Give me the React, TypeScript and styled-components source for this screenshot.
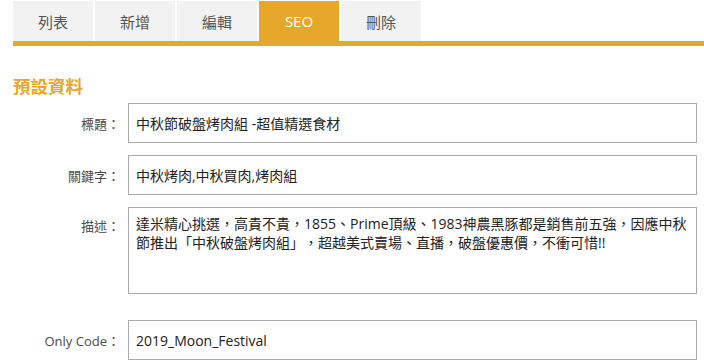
import styled, { createGlobalStyle } from "styled-components";

const tabs = ["列表", "新增", "編輯", "SEO", "刪除"];
const activeTab = "SEO";

const description =
  "達米精心挑選，高貴不貴，1855、Prime頂級、1983神農黑豚都是銷售前五強，因應中秋節推出「中秋破盤烤肉組」，超越美式賣場、直播，破盤優惠價，不衝可惜!!";

const SeoPage = () => {
  return (
    <>
      <GlobalStyle />
      <Wrapper>
        <TabBar>
          {tabs.map((t) => (
            <Tab key={t} $active={t === activeTab}>
              {t}
            </Tab>
          ))}
        </TabBar>

        <Heading>預設資料</Heading>
      </Wrapper>

      <Form>
        <Label>標題：</Label>
        <TextInput readOnly value="中秋節破盤烤肉組 -超值精選食材" />

        <Label>關鍵字：</Label>
        <TextInput readOnly value="中秋烤肉,中秋買肉,烤肉組" />

        <Label $top>描述：</Label>
        <TextArea readOnly value={description} />

        <Spacer />

        <Label>Only Code：</Label>
        <TextInput readOnly value="2019_Moon_Festival" />
      </Form>
    </>
  );
};

export default SeoPage;

const GlobalStyle = createGlobalStyle`
  body {
    margin: 0;
    background: #fff;
    font-family: "Open Sans", "Noto Sans CJK TC", sans-serif;
    text-spacing-trim: space-all;
  }
`;

const Wrapper = styled.div`
  padding: 1px 0 0 13px;
`;

const TabBar = styled.div`
  display: flex;
  gap: 2px;
  border-bottom: 5px solid #e6a72a;
`;

const Tab = styled.div<{ $active?: boolean }>`
  width: 80px;
  height: 40px;
  display: flex;
  align-items: center;
  justify-content: center;
  font-size: 15px;
  color: ${(p) => (p.$active ? "#fff" : "#555")};
  background: ${(p) => (p.$active ? "#e6a72a" : "#f2f2f2")};
`;

const Heading = styled.h2`
  margin: 29px 0 0;
  font-size: 17.5px;
  line-height: 22px;
  font-weight: bold;
  color: #e6a72a;
`;

const Form = styled.div`
  display: grid;
  grid-template-columns: 120px 1fr;
  column-gap: 8px;
  row-gap: 12px;
  margin: 6px 7px 0 0;
`;

const Label = styled.div<{ $top?: boolean }>`
  font-size: 13px;
  color: #4a4a4a;
  text-align: right;
  align-self: ${(p) => (p.$top ? "start" : "center")};
  padding-top: ${(p) => (p.$top ? "9px" : "0")};
  white-space: nowrap;
`;

const TextInput = styled.input`
  box-sizing: border-box;
  height: 40px;
  width: 100%;
  border: 1px solid #aaa;
  padding: 0 7px;
  font-family: inherit;
  font-size: 14px;
  color: #222;
  outline: none;
  text-spacing-trim: space-all;
`;

const TextArea = styled.textarea`
  box-sizing: border-box;
  height: 87px;
  width: 100%;
  border: 1px solid #aaa;
  padding: 6px 7px;
  font-family: inherit;
  font-size: 14px;
  line-height: 19px;
  color: #222;
  resize: none;
  outline: none;
  text-spacing-trim: space-all;
`;

const Spacer = styled.div`
  grid-column: 1 / -1;
  height: 2px;
`;
